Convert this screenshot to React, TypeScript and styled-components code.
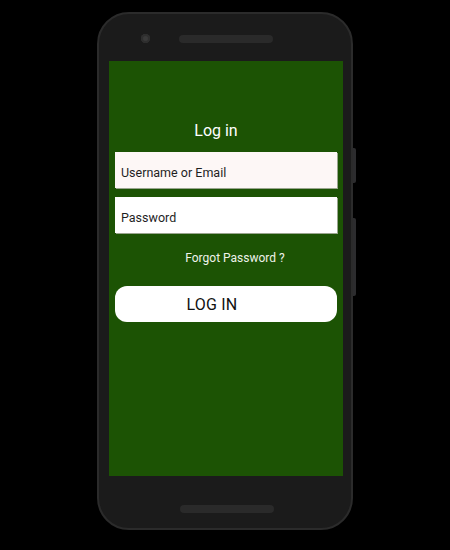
import styled, { createGlobalStyle } from "styled-components";

const GlobalStyle = createGlobalStyle`
  html, body {
    margin: 0;
    padding: 0;
    background: #000;
  }
  body {
    font-family: Roboto, "Liberation Sans", Arial, sans-serif;
  }
`;

const App = () => {
  return (
    <>
      <GlobalStyle />
      <Page>
        <Phone>
          <SideButton $top={134} $height={35} />
          <SideButton $top={204} $height={78} />
          <TopBezel>
            <Camera />
            <Speaker />
          </TopBezel>
          <Screen>
            <Title>Log in</Title>
            <Field $bg="#fdf7f6">
              <span>Username or Email</span>
            </Field>
            <Field $bg="#ffffff">
              <span>Password</span>
            </Field>
            <Forgot>Forgot Password ?</Forgot>
            <LoginBtn>LOG IN</LoginBtn>
          </Screen>
          <BottomBezel>
            <Speaker />
          </BottomBezel>
        </Phone>
      </Page>
    </>
  );
};

export default App;

const Page = styled.div`
  width: 450px;
  height: 550px;
  display: flex;
  justify-content: center;
  padding-top: 12px;
  box-sizing: border-box;
  background: #000;
`;

const Phone = styled.div`
  position: relative;
  width: 256px;
  height: 518px;
  box-sizing: border-box;
  border: 2px solid #2b2b2b;
  border-radius: 32px;
  background: #1b1b1b;
  display: flex;
  flex-direction: column;
  padding: 0 8px 0 10px;
`;

const SideButton = styled.div<{ $top: number; $height: number }>`
  position: absolute;
  right: -5px;
  top: ${(p) => p.$top}px;
  width: 3px;
  height: ${(p) => p.$height}px;
  background: #2c2c2e;
  border-radius: 0 2px 2px 0;
`;

const TopBezel = styled.div`
  height: 47px;
  display: flex;
  align-items: center;
  padding-left: 32px;
  gap: 29px;
  box-sizing: border-box;
  padding-top: 2px;
`;

const Camera = styled.div`
  width: 9px;
  height: 9px;
  border-radius: 50%;
  background: #3a3a3a;
  box-shadow: inset 0 0 0 2px #2e2e2e;
`;

const Speaker = styled.div`
  width: 94px;
  height: 8px;
  border-radius: 4px;
  background: #2a2a2a;
`;

const Screen = styled.div`
  height: 415px;
  background: #1c5304;
  display: flex;
  flex-direction: column;
  padding: 60px 6px 0;
  box-sizing: border-box;
`;

const Title = styled.div`
  color: #fff;
  font-size: 16px;
  line-height: 20px;
  text-align: center;
  padding-right: 20px;
  margin-bottom: 11px;
`;

const Field = styled.div<{ $bg: string }>`
  height: 36px;
  background: ${(p) => p.$bg};
  box-shadow: 1px 1px 0 #9aa58f;
  display: flex;
  align-items: center;
  padding: 5px 6px 0;
  box-sizing: border-box;
  margin-bottom: 9px;
  font-size: 12.5px;
  color: #1f1f1f;
`;

const Forgot = styled.div`
  color: #eef2ea;
  font-size: 12px;
  text-align: center;
  padding-left: 18px;
  margin-top: 9px;
  line-height: 14px;
`;

const LoginBtn = styled.div`
  margin-top: 21px;
  height: 36px;
  border-radius: 12px;
  background: #fff;
  display: flex;
  align-items: center;
  justify-content: center;
  padding-right: 28px;
  padding-top: 1px;
  box-sizing: border-box;
  font-size: 16px;
  color: #111;
  letter-spacing: 0.2px;
`;

const BottomBezel = styled.div`
  flex: 1;
  display: flex;
  justify-content: center;
  align-items: flex-start;
  padding-left: 2px;
  padding-top: 29px;
`;
